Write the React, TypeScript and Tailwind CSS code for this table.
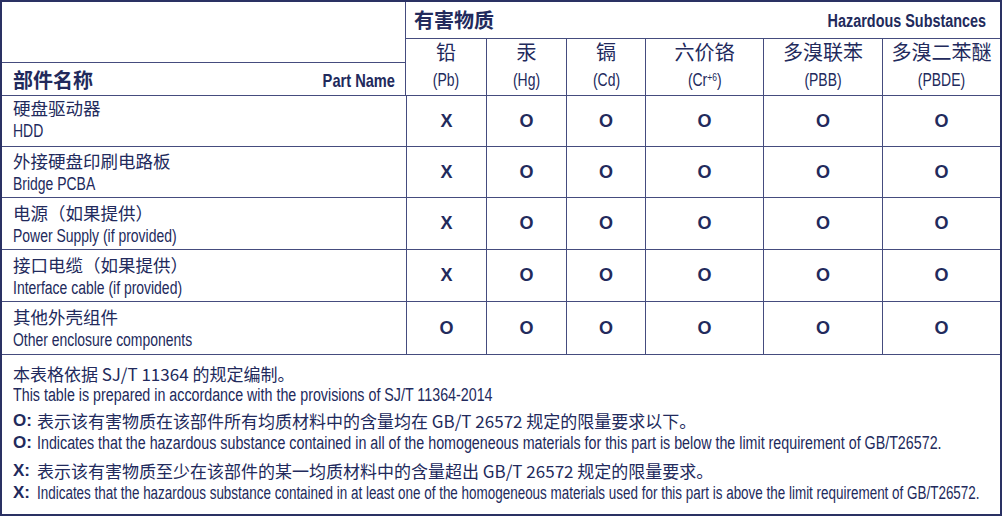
// condensed Helvetica look: Liberation Sans squeezed horizontally
const narrow = "inline-block font-['Liberation_Sans',sans-serif]";
const cjk = "font-['Noto_Sans_CJK_SC',sans-serif]";
const bold = "font-['Liberation_Sans','Noto_Sans_CJK_SC',sans-serif] font-bold";
const line = "border-[#454c7e]";

const cols = "grid grid-cols-[404px_80px_80px_79px_118px_119px_118px]";

const substances = [
  { zh: "铅", en: "(Pb)" },
  { zh: "汞", en: "(Hg)" },
  { zh: "镉", en: "(Cd)" },
  { zh: "六价铬", en: "cr" },
  { zh: "多溴联苯", en: "(PBB)" },
  { zh: "多溴二苯醚", en: "(PBDE)" },
];

const rows = [
  { zh: "硬盘驱动器", en: "HDD", marks: "XOOOOO", h: "h-[51px]", pt: "pt-[1px]" },
  { zh: "外接硬盘印刷电路板", en: "Bridge PCBA", marks: "XOOOOO", h: "h-[51px]", pt: "pt-[3px]" },
  { zh: "电源（如果提供）", en: "Power Supply (if provided)", marks: "XOOOOO", h: "h-[52px]", pt: "pt-[4px]" },
  { zh: "接口电缆（如果提供）", en: "Interface cable (if provided)", marks: "XOOOOO", h: "h-[52px]", pt: "pt-[4px]" },
  { zh: "其他外壳组件", en: "Other enclosure components", marks: "OOOOOO", h: "h-[53px]", pt: "pt-[4px]" },
];

export default function App() {
  return (
    <div className="h-[516px] w-[1002px] overflow-hidden bg-white text-[#222a5c]">
      <div className="flex h-full flex-col border-2 border-[#2a3163]">
        {/* HEADER */}
        <div className="flex h-[93px] shrink-0">
          <div className="flex w-[404px] flex-col">
            <div className={`h-[62px] border-b ${line}`} />
            <div className="flex flex-1 items-center justify-between pl-[11px] pr-[10px]">
              <span className={`${cjk} mt-[2px] text-[20px] font-bold leading-[24px]`}>部件名称</span>
              <span className={`${narrow} mt-[4px] origin-right scale-x-[0.77] text-[19px] font-bold`}>Part Name</span>
            </div>
          </div>
          <div className={`flex flex-1 flex-col border-l ${line}`}>
            <div className={`flex h-[37px] items-center justify-between border-b ${line} pl-[8px] pr-[14px]`}>
              <span className={`${cjk} text-[20px] font-bold`}>有害物质</span>
              <span className={`${narrow} mt-[2px] origin-right scale-x-[0.8] text-[18px] font-bold`}>
                Hazardous Substances
              </span>
            </div>
            <div className="grid flex-1 grid-cols-[80px_80px_79px_118px_119px_118px]">
              {substances.map((s, i) => (
                <div key={s.zh} className={`flex flex-col items-center pt-[1px] ${i > 0 ? `border-l ${line}` : ""}`}>
                  <span className={`${cjk} text-[20px] leading-[24px]`}>{s.zh}</span>
                  <span className={`${narrow} mt-[5px] scale-x-[0.775] text-[18px] leading-[22px]`}>
                    {s.en === "cr" ? (
                      <>
                        (Cr<sup className="text-[11px]">+6</sup>)
                      </>
                    ) : (
                      s.en
                    )}
                  </span>
                </div>
              ))}
            </div>
          </div>
        </div>

        {/* ROWS */}
        {rows.map((r) => (
          <div key={r.en} className={`${cols} ${r.h} shrink-0 border-t ${line}`}>
            <div className={`flex flex-col pl-[11px] ${r.pt}`}>
              <span className={`${cjk} text-[17.5px] leading-[22px]`}>{r.zh}</span>
              <span className={`${narrow} mt-[1px] w-max origin-left scale-x-[0.775] text-[18px] leading-[22px]`}>
                {r.en}
              </span>
            </div>
            {r.marks.split("").map((m, i) => (
              <div key={i} className={`flex items-center justify-center border-l ${line} ${bold} text-[18px]`}>
                {m}
              </div>
            ))}
          </div>
        ))}

        {/* NOTES */}
        <div className={`flex-1 border-t ${line} whitespace-nowrap pl-[11px] pt-[8px]`}>
          <p className={`${cjk} text-[17px] leading-[22px]`}>本表格依据 SJ/T 11364 的规定编制。</p>
          <p className="leading-[20px]">
            <span className={`${narrow} origin-left scale-x-[0.793] text-[18px]`}>
              This table is prepared in accordance with the provisions of SJ/T 11364-2014
            </span>
          </p>
          <p className={`${cjk} mt-[5px] flex text-[17px] leading-[22px]`}>
            <span className={`${bold} w-[24px] shrink-0`}>O:</span>
            <span>表示该有害物质在该部件所有均质材料中的含量均在 GB/T 26572 规定的限量要求以下。</span>
          </p>
          <p className="flex leading-[22px]">
            <span className={`${bold} w-[24px] shrink-0 text-[17px]`}>O:</span>
            <span className={`${narrow} shrink-0 origin-left scale-x-[0.793] text-[18px]`}>
              Indicates that the hazardous substance contained in all of the homogeneous materials for this part is below the limit requirement of GB/T26572.
            </span>
          </p>
          <p className={`${cjk} mt-[6px] flex text-[17px] leading-[22px]`}>
            <span className={`${bold} w-[24px] shrink-0`}>X:</span>
            <span>表示该有害物质至少在该部件的某一均质材料中的含量超出 GB/T 26572 规定的限量要求。</span>
          </p>
          <p className="flex leading-[22px]">
            <span className={`${bold} w-[24px] shrink-0 text-[17px]`}>X:</span>
            <span className={`${narrow} shrink-0 origin-left scale-x-[0.747] text-[18px]`}>
              Indicates that the hazardous substance contained in at least one of the homogeneous materials used for this part is above the limit requirement of GB/T26572.
            </span>
          </p>
        </div>
      </div>
    </div>
  );
}
